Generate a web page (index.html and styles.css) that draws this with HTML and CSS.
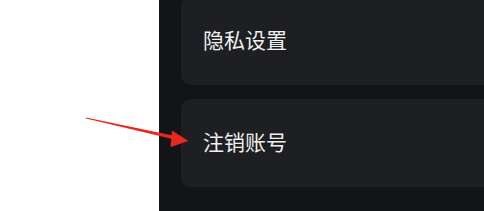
FILE: index.html
```html
<!DOCTYPE html>
<html lang="zh">
<head>
<meta charset="utf-8">
<link rel="stylesheet" href="styles.css">
</head>
<body>
<div class="page">
  <div class="blank"></div>
  <div class="panel">
    <div class="card first"><span class="label">隐私设置</span></div>
    <div class="card"><span class="label">注销账号</span></div>
  </div>
  <svg class="arrow" width="484" height="211" viewBox="0 0 484 211">
    <polygon points="86,117.6 176.4,136.2 175.6,139.8 86,118.4" fill="#e8281e"/>
    <polygon points="172,130.5 188.5,141 170.5,147" fill="#e8281e"/>
  </svg>
</div>
</body>
</html>
```
FILE: styles.css
```css
html, body {
  margin: 0;
  padding: 0;
  background: #ffffff;
}
.page {
  position: relative;
  width: 484px;
  height: 211px;
  display: flex;
  overflow: hidden;
}
.blank {
  width: 159px;
  flex: none;
  background: #ffffff;
}
.panel {
  flex: 1;
  background: #131417;
  padding-left: 22px;
  display: flex;
  flex-direction: column;
  gap: 14px;
}
.card {
  height: 88px;
  box-sizing: border-box;
  padding-bottom: 3px;
  background: #1e1f22;
  border-radius: 10px 0 0 10px;
  display: flex;
  align-items: center;
  padding-left: 22px;
  flex: none;
}
.card.first {
  margin-top: -3px;
}
.label {
  color: #f0f0f0;
  font-family: "Noto Sans CJK SC", "Noto Sans", sans-serif;
  font-size: 21px;
  line-height: 1;
}
.arrow {
  position: absolute;
  left: 0;
  top: 0;
  pointer-events: none;
}
```
